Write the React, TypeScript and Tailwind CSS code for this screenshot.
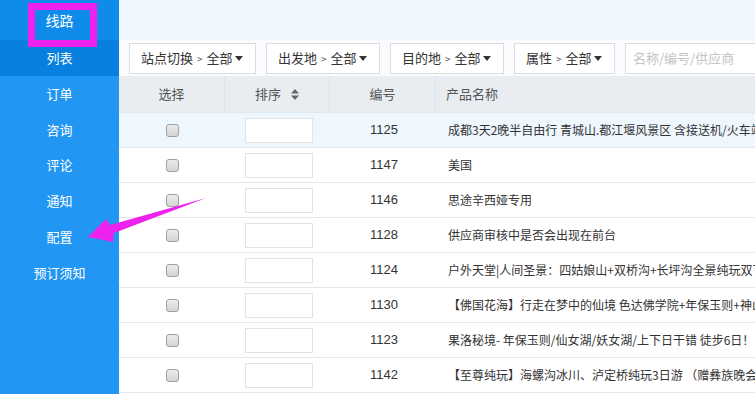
import React from "react";

const MENU = ["订单", "咨询", "评论", "通知", "配置", "预订须知"];

const FILTERS = [
  { label: "站点切换", w: "w-[127px]" },
  { label: "出发地", w: "w-[114px]" },
  { label: "目的地", w: "w-[114px]" },
  { label: "属性", w: "w-[101px]" },
];

const ROWS = [
  { id: 1125, name: "成都3天2晚半自由行 青城山.都江堰风景区 含接送机/火车站接送" },
  { id: 1147, name: "美国" },
  { id: 1146, name: "思途辛西娅专用" },
  { id: 1128, name: "供应商审核中是否会出现在前台" },
  { id: 1124, name: "户外天堂|人间圣景：四姑娘山+双桥沟+长坪沟全景纯玩双飞" },
  { id: 1130, name: "【佛国花海】行走在梦中的仙境 色达佛学院+年保玉则+神山" },
  { id: 1123, name: "果洛秘境- 年保玉则/仙女湖/妖女湖/上下日干错 徒步6日！" },
  { id: 1142, name: "【至尊纯玩】海螺沟冰川、泸定桥纯玩3日游 （赠彝族晚会）" },
];

const font = "font-['Microsoft_YaHei','Noto_Sans_CJK_SC',sans-serif]";

export default function App() {
  return (
    <div className={`relative flex w-[755px] h-[394px] overflow-hidden bg-white ${font}`}>
      {/* Sidebar */}
      <div className="w-[119px] shrink-0 bg-[#2196f3] text-white text-[13px]">
        <div className="h-10 bg-[#0f8ceb] flex items-center justify-center text-[14px]">线路</div>
        <div className="h-9 bg-[#0880e0] flex items-center justify-center">列表</div>
        {MENU.map((m) => (
          <div key={m} className="h-[35.7px] flex items-center justify-center">
            {m}
          </div>
        ))}
      </div>

      {/* Main */}
      <div className="flex-1 min-w-0 flex flex-col">
        <div className="h-10 bg-[#eef6fe]" />

        {/* Filters */}
        <div className="h-9 bg-[#f9fbfe] flex items-center gap-[10px] pl-[10px] text-[13px] text-[#333]">
          {FILTERS.map((f) => (
            <div
              key={f.label}
              className={`${f.w} h-[31px] shrink-0 bg-white border border-[#dcdcdc] flex items-center pl-[11px] pr-[12px] whitespace-nowrap`}
            >
              <span>{f.label}</span>
              <span className="mx-[4px] text-[10px] text-[#555]">&gt;</span>
              <span>全部</span>
              <span className="ml-auto w-0 h-0 border-l-[4px] border-r-[4px] border-t-[5px] border-l-transparent border-r-transparent border-t-[#333]" />
            </div>
          ))}
          <div className="w-[140px] h-[31px] shrink-0 bg-white border border-[#dcdcdc] flex items-center px-[7px] text-[#c4c4c4] whitespace-nowrap">
            名称/编号/供应商
          </div>
        </div>

        {/* Table header */}
        <div className="h-[37px] bg-[#e9edf2] flex text-[13px] text-[#555] border-b border-[#e2e7ee]">
          <div className="w-[106px] flex items-center justify-center border-r border-[#dde2e8]">选择</div>
          <div className="w-[105px] flex items-center justify-center border-r border-[#dde2e8]">
            排序
            <svg width="8" height="11" viewBox="0 0 8 11" className="ml-[10px]">
              <path d="M4 0L8 4.5H0z" fill="#666" />
              <path d="M4 11L8 6.5H0z" fill="#666" />
            </svg>
          </div>
          <div className="w-[106px] flex items-center justify-center border-r border-[#dde2e8]">编号</div>
          <div className="flex-1 flex items-center pl-[10px]">产品名称</div>
        </div>

        {/* Rows */}
        {ROWS.map((r, i) => (
          <div
            key={r.id}
            className={`h-[35px] shrink-0 flex items-center border-b border-[#e3e7ec] text-[12px] text-[#333] ${
              i === 0 ? "bg-[#eef6fe]" : "bg-white"
            }`}
          >
            <div className="w-[107px] flex justify-center">
              <span className="w-[13px] h-[13px] rounded-[3px] border border-[#a0a0a0] bg-gradient-to-b from-[#ececec] to-[#d4d4d4]" />
            </div>
            <div className="w-[105px] flex justify-center">
              <div className="w-[68px] h-[25px] bg-white border border-[#e3e3e3]" />
            </div>
            <div className="w-[106px] text-center font-['Liberation_Sans',sans-serif] text-[13px]">{r.id}</div>
            <div className="flex-1 pl-[11px] whitespace-nowrap overflow-hidden">{r.name}</div>
          </div>
        ))}
      </div>

      {/* Annotations */}
      <div className="absolute left-[28px] top-[3px] w-[69px] h-[44px] border-[7px] border-[#ee22ee]" />
      <svg className="absolute left-0 top-0 pointer-events-none" width="755" height="394">
        <polygon points="88,237 106,219 110,225 206,198 114,233 113,242" fill="#ee22ee" />
      </svg>
    </div>
  );
}
